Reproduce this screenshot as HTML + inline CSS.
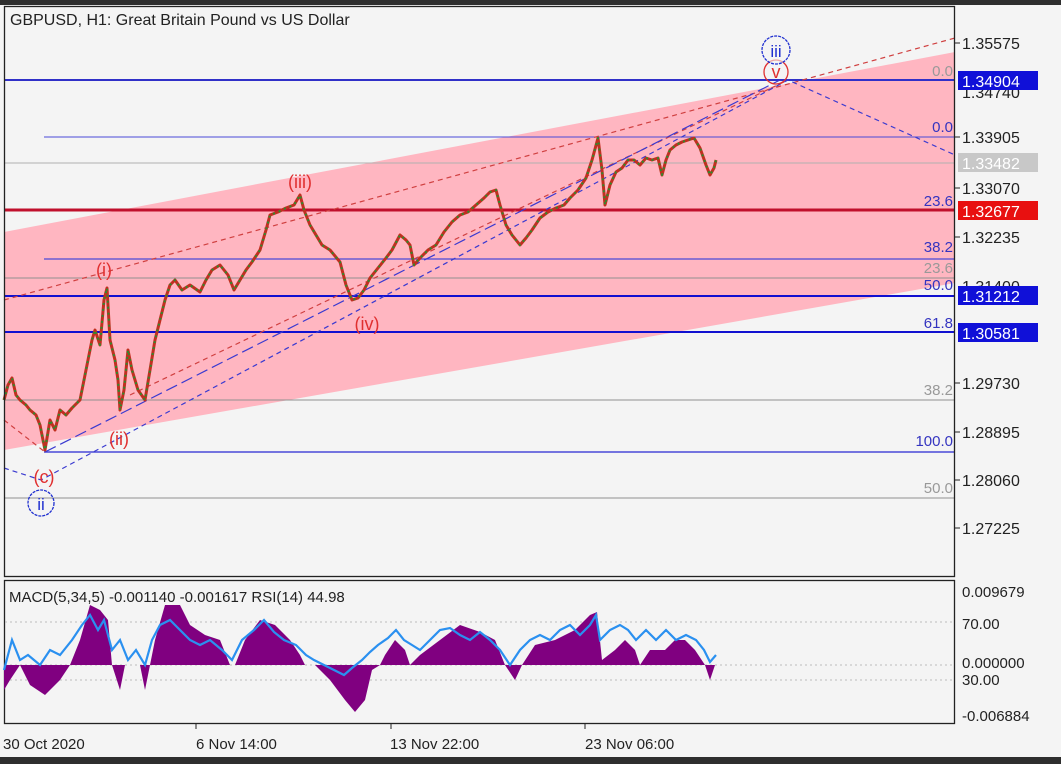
<!DOCTYPE html>
<html><head><meta charset="utf-8"><style>
html,body{margin:0;padding:0;background:#f4f4f4;}
svg{display:block;font-family:"Liberation Sans",sans-serif;}
</style></head><body>
<svg width="1061" height="764" viewBox="0 0 1061 764" xmlns="http://www.w3.org/2000/svg">
<defs>
<polyline id="px" fill="none" stroke-linejoin="round" points="4,400 8,385 12,378 16,395 20,400 26,405 30,410 36,415 40,425 45,450 50,420 55,430 60,410 66,415 72,408 80,400 86,370 92,340 95,330 100,345 104,300 107,288 110,340 115,360 118,380 120,410 124,390 128,350 132,370 138,390 145,400 150,370 155,340 160,320 165,300 170,285 175,280 182,290 190,285 200,292 206,280 212,270 220,265 228,275 234,290 240,280 246,270 252,262 260,250 266,230 270,215 278,212 286,208 294,205 300,195 304,210 310,225 316,235 322,245 330,250 340,262 346,285 352,300 358,298 364,290 370,278 378,268 386,258 392,250 400,235 406,240 410,245 414,265 420,258 428,250 436,245 444,232 452,222 460,215 468,212 476,205 484,198 490,192 496,190 500,205 506,225 512,235 520,245 526,238 532,230 540,218 548,212 556,208 564,205 570,198 578,190 586,178 592,160 598,138 602,170 605,205 610,185 616,172 622,168 628,160 634,160 640,165 646,158 652,160 658,158 662,175 666,160 670,150 676,145 682,142 688,140 694,138 700,148 706,165 710,175 714,168 716,160"/>
</defs>
<rect width="1061" height="764" fill="#f4f4f4"/>
<rect width="1061" height="5" fill="#2e2e2e"/>
<rect y="757" width="1061" height="7" fill="#2e2e2e"/>
<polygon points="4,232 955,52 955,283 4,450" fill="#ffb6c1"/>
<g>
<line x1="4" y1="80" x2="955" y2="80" stroke="#3030c8" stroke-width="2"/>
<line x1="44" y1="137" x2="955" y2="137" stroke="#4a4ad8" stroke-width="1"/>
<line x1="4" y1="163" x2="955" y2="163" stroke="#b0b0b0" stroke-width="1"/>
<line x1="4" y1="210" x2="955" y2="210" stroke="#c0102c" stroke-width="3"/>
<line x1="44" y1="259" x2="955" y2="259" stroke="#4a4ad8" stroke-width="1.3"/>
<line x1="4" y1="278" x2="955" y2="278" stroke="#909090" stroke-width="1"/>
<line x1="4" y1="296" x2="955" y2="296" stroke="#1010d0" stroke-width="2"/>
<line x1="4" y1="332" x2="955" y2="332" stroke="#1010d0" stroke-width="2"/>
<line x1="4" y1="400" x2="955" y2="400" stroke="#909090" stroke-width="1"/>
<line x1="44" y1="452" x2="955" y2="452" stroke="#4a4ad8" stroke-width="1.5"/>
<line x1="4" y1="498" x2="955" y2="498" stroke="#909090" stroke-width="1"/>
</g>
<g fill="none" stroke-dasharray="5,4" stroke-width="1.2">
<line x1="4" y1="300" x2="955" y2="38" stroke="#d04040"/>
<line x1="4" y1="420" x2="45" y2="452" stroke="#d04040"/>
<line x1="130" y1="395" x2="788" y2="80" stroke="#d04040"/>
<polyline points="4,468 41,480 788,80 955,155" stroke="#3a3ad0"/>
<line x1="45" y1="452" x2="780" y2="80" stroke="#3a3ad0" stroke-dasharray="12,5"/>
</g>
<use href="#px" stroke="#c03020" stroke-width="3"/>
<use href="#px" stroke="#2e8b2e" stroke-width="2" stroke-dasharray="2,4"/>
<g font-size="18" fill="#e03030" text-anchor="middle">
<text x="104" y="276">(i)</text>
<text x="300" y="188">(iii)</text>
<text x="367" y="330">(iv)</text>
<text x="119" y="445">(ii)</text>
<text x="44" y="483">(c)</text>
</g>
<circle cx="41" cy="503" r="13" fill="none" stroke="#2030d0" stroke-width="1.3" stroke-dasharray="3,1"/>
<text x="41" y="510" font-size="17" fill="#2030d0" text-anchor="middle">ii</text>
<circle cx="776" cy="72" r="12" fill="none" stroke="#e03030" stroke-width="1.3"/>
<text x="776" y="78" font-size="18" fill="#e03030" text-anchor="middle">v</text>
<circle cx="776" cy="50" r="14" fill="#f4f4f4" fill-opacity="0.6" stroke="#2030d0" stroke-width="1.3" stroke-dasharray="3,1"/>
<text x="776" y="57" font-size="17" fill="#2030d0" text-anchor="middle">iii</text>
<g font-size="15" text-anchor="end">
<text x="953" y="76" fill="#999">0.0</text>
<text x="953" y="132" fill="#3434c0">0.0</text>
<text x="953" y="206" fill="#3434c0">23.6</text>
<text x="953" y="252" fill="#3434c0">38.2</text>
<text x="953" y="273" fill="#999">23.6</text>
<text x="953" y="290" fill="#3434c0">50.0</text>
<text x="953" y="328" fill="#3434c0">61.8</text>
<text x="953" y="395" fill="#999">38.2</text>
<text x="953" y="446" fill="#3434c0">100.0</text>
<text x="953" y="493" fill="#999">50.0</text>
</g>
<text x="10" y="25" font-size="16" fill="#222">GBPUSD, H1:  Great Britain Pound vs US Dollar</text>
<rect x="4.5" y="6.5" width="950" height="570" fill="none" stroke="#222" stroke-width="1.3"/>
<g font-size="16" fill="#222">
<text x="962" y="49">1.35575</text>
<text x="962" y="98">1.34740</text>
<text x="962" y="143">1.33905</text>
<text x="962" y="194">1.33070</text>
<text x="962" y="243">1.32235</text>
<text x="962" y="292">1.31400</text>
<text x="962" y="389">1.29730</text>
<text x="962" y="438">1.28895</text>
<text x="962" y="486">1.28060</text>
<text x="962" y="534">1.27225</text>
</g>
<g stroke="#222"><line x1="955" y1="43" x2="960" y2="43"/><line x1="955" y1="137" x2="960" y2="137"/><line x1="955" y1="188" x2="960" y2="188"/><line x1="955" y1="237" x2="960" y2="237"/><line x1="955" y1="383" x2="960" y2="383"/><line x1="955" y1="432" x2="960" y2="432"/><line x1="955" y1="480" x2="960" y2="480"/><line x1="955" y1="528" x2="960" y2="528"/></g>
<g font-size="16" fill="#fff">
<rect x="958" y="71" width="80" height="19" fill="#1010d8"/><text x="962" y="87">1.34904</text>
<rect x="958" y="153" width="80" height="19" fill="#c8c8c8"/><text x="962" y="169">1.33482</text>
<rect x="958" y="201" width="80" height="19" fill="#e81010"/><text x="962" y="217">1.32677</text>
<rect x="958" y="286" width="80" height="19" fill="#1010d8"/><text x="962" y="302">1.31212</text>
<rect x="958" y="323" width="80" height="19" fill="#1010d8"/><text x="962" y="339">1.30581</text>
</g>
<rect x="4.5" y="580.5" width="950" height="143" fill="#f4f4f4" stroke="#222" stroke-width="1.3"/>
<g stroke="#bbb" stroke-dasharray="2,3"><line x1="5" y1="622" x2="955" y2="622"/><line x1="5" y1="665" x2="955" y2="665"/><line x1="5" y1="680" x2="955" y2="680"/></g>
<polygon fill="#800080" points="4,665 4,690 10,680 20,665 30,685 45,695 60,680 70,665 80,640 90,605 100,610 108,620 112,665 120,690 125,665 140,665 145,690 150,665 155,640 165,605 180,605 190,625 205,635 220,640 230,665 235,665 245,640 260,620 275,625 290,640 300,655 305,665 315,665 330,680 345,700 355,712 365,700 372,670 380,665 385,655 395,640 405,650 410,665 420,655 440,640 460,625 480,632 495,640 505,665 515,680 522,665 535,645 555,640 575,630 590,615 597,612 602,660 615,650 625,640 635,650 640,665 650,650 665,650 675,640 685,640 695,650 705,665 710,680 715,665"/>
<polyline fill="none" stroke="#2a90f0" stroke-width="2.2" points="4,670 12,640 20,660 28,655 40,665 50,650 60,655 72,640 82,625 90,615 98,630 104,620 112,650 120,640 128,660 136,650 145,665 152,640 160,625 170,620 180,630 190,640 200,645 210,640 222,650 232,660 242,640 254,630 264,620 274,632 284,640 296,645 306,655 314,660 324,665 334,670 344,675 352,668 362,660 370,652 378,645 388,638 396,630 404,640 412,645 420,650 430,640 440,630 450,628 460,635 470,640 480,632 490,640 500,650 510,665 520,650 530,640 540,635 550,640 560,630 570,625 580,635 590,625 596,615 600,640 610,630 620,625 628,630 636,640 646,630 656,640 666,630 676,640 686,635 696,640 704,650 710,662 716,655"/>
<text x="9" y="602" font-size="15" fill="#222">MACD(5,34,5) -0.001140 -0.001617 RSI(14) 44.98</text>
<g font-size="15" fill="#222">
<text x="962" y="597">0.009679</text>
<text x="962" y="629">70.00</text>
<text x="962" y="668">0.000000</text>
<text x="962" y="685">30.00</text>
<text x="962" y="721">-0.006884</text>
<text x="3" y="749">30 Oct 2020</text>
<text x="196" y="749">6 Nov 14:00</text>
<text x="390" y="749">13 Nov 22:00</text>
<text x="585" y="749">23 Nov 06:00</text>
</g>
<g stroke="#222"><line x1="196" y1="724" x2="196" y2="729"/><line x1="391" y1="724" x2="391" y2="729"/><line x1="585" y1="724" x2="585" y2="729"/></g>
</svg>
</body></html>
